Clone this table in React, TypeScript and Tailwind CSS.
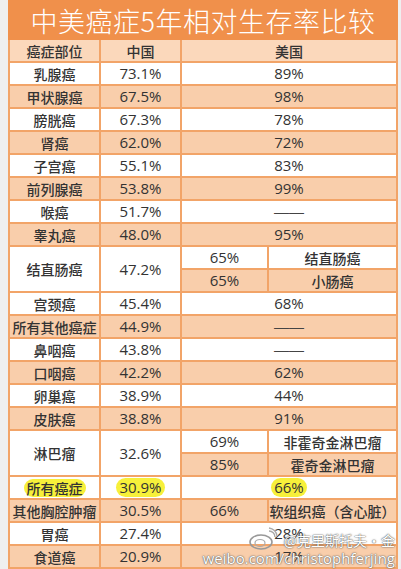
import React from "react";

type Row =
  | { kind: "single"; name: string; cn: string; us: string; bg: "w" | "p"; hl?: boolean }
  | { kind: "pair"; name: string; cn: string; us: string; note: string; bg: "w" | "p" }
  | { kind: "split"; name: string; cn: string; subs: [string, string][] };

const rows: Row[] = [
  { kind: "single", name: "乳腺癌", cn: "73.1%", us: "89%", bg: "w" },
  { kind: "single", name: "甲状腺癌", cn: "67.5%", us: "98%", bg: "p" },
  { kind: "single", name: "膀胱癌", cn: "67.3%", us: "78%", bg: "w" },
  { kind: "single", name: "肾癌", cn: "62.0%", us: "72%", bg: "p" },
  { kind: "single", name: "子宫癌", cn: "55.1%", us: "83%", bg: "w" },
  { kind: "single", name: "前列腺癌", cn: "53.8%", us: "99%", bg: "p" },
  { kind: "single", name: "喉癌", cn: "51.7%", us: "——", bg: "w" },
  { kind: "single", name: "睾丸癌", cn: "48.0%", us: "95%", bg: "p" },
  { kind: "split", name: "结直肠癌", cn: "47.2%", subs: [["65%", "结直肠癌"], ["65%", "小肠癌"]] },
  { kind: "single", name: "宫颈癌", cn: "45.4%", us: "68%", bg: "w" },
  { kind: "single", name: "所有其他癌症", cn: "44.9%", us: "——", bg: "p" },
  { kind: "single", name: "鼻咽癌", cn: "43.8%", us: "——", bg: "w" },
  { kind: "single", name: "口咽癌", cn: "42.2%", us: "62%", bg: "p" },
  { kind: "single", name: "卵巢癌", cn: "38.9%", us: "44%", bg: "w" },
  { kind: "single", name: "皮肤癌", cn: "38.8%", us: "91%", bg: "p" },
  { kind: "split", name: "淋巴瘤", cn: "32.6%", subs: [["69%", "非霍奇金淋巴瘤"], ["85%", "霍奇金淋巴瘤"]] },
  { kind: "single", name: "所有癌症", cn: "30.9%", us: "66%", bg: "w", hl: true },
  { kind: "pair", name: "其他胸腔肿瘤", cn: "30.5%", us: "66%", note: "软组织癌（含心脏）", bg: "p" },
  { kind: "single", name: "胃癌", cn: "27.4%", us: "28%", bg: "w" },
  { kind: "single", name: "食道癌", cn: "20.9%", us: "17%", bg: "p" },
];

const cjk = "font-['Noto_Sans_CJK_SC',sans-serif] font-medium text-[14px]";
const num = "font-['Open_Sans','Noto_Sans_CJK_SC',sans-serif] text-[15px]";
const dash = "font-['Liberation_Sans',sans-serif] text-[15px] text-[#444]";
const cell = "flex items-center justify-center text-[#333] leading-none whitespace-nowrap";
const bgOf = (b: "w" | "p") => (b === "w" ? "bg-white" : "bg-[#f9ceab]");

function Hl({ children }: { children: React.ReactNode }) {
  return <span className="bg-[#f7f03a] rounded-full px-[3px] py-[2px]">{children}</span>;
}

export default function App() {
  return (
    <div className="w-[401px] h-[569px] overflow-hidden bg-[#efefef] relative">
      <div className="ml-[8px] w-[390px]">
        <div className="h-[40px] bg-[#f0904b] flex items-center justify-center">
          <span className="font-['Noto_Sans_CJK_SC',sans-serif] font-light text-[27px] text-white leading-none tracking-[0.5px]">
            中美癌症5年相对生存率比较
          </span>
        </div>
        <div className="bg-[#f2a468] p-[2px] pt-0 grid grid-cols-[89px_79px_85px_127px] auto-rows-[21px] gap-[2px]">
          <div className={`${cell} ${cjk} bg-[#fbd8bb]`}>癌症部位</div>
          <div className={`${cell} ${cjk} bg-[#fbd8bb]`}>中国</div>
          <div className={`${cell} ${cjk} bg-[#fbd8bb] col-span-2`}>美国</div>
          {rows.map((r) => {
            if (r.kind === "split") {
              return (
                <React.Fragment key={r.name}>
                  <div className={`${cell} ${cjk} bg-white row-span-2`}>{r.name}</div>
                  <div className={`${cell} ${num} bg-white row-span-2`}>{r.cn}</div>
                  <div className={`${cell} ${num} bg-white`}>{r.subs[0][0]}</div>
                  <div className={`${cell} ${cjk} bg-white`}>{r.subs[0][1]}</div>
                  <div className={`${cell} ${num} bg-[#f9ceab]`}>{r.subs[1][0]}</div>
                  <div className={`${cell} ${cjk} bg-[#f9ceab]`}>{r.subs[1][1]}</div>
                </React.Fragment>
              );
            }
            if (r.kind === "pair") {
              return (
                <React.Fragment key={r.name}>
                  <div className={`${cell} ${cjk} ${bgOf(r.bg)}`}>{r.name}</div>
                  <div className={`${cell} ${num} ${bgOf(r.bg)}`}>{r.cn}</div>
                  <div className={`${cell} ${num} ${bgOf(r.bg)}`}>{r.us}</div>
                  <div className={`${cell} ${cjk} ${bgOf(r.bg)}`}>{r.note}</div>
                </React.Fragment>
              );
            }
            return (
              <React.Fragment key={r.name}>
                <div className={`${cell} ${cjk} ${bgOf(r.bg)}`}>{r.hl ? <Hl>{r.name}</Hl> : r.name}</div>
                <div className={`${cell} ${num} ${bgOf(r.bg)}`}>{r.hl ? <Hl>{r.cn}</Hl> : r.cn}</div>
                <div className={`${cell} ${r.us === "——" ? dash : num} ${bgOf(r.bg)} col-span-2`}>
                  {r.hl ? <Hl>{r.us}</Hl> : r.us}
                </div>
              </React.Fragment>
            );
          })}
          <div className={`${cell} bg-white`} />
          <div className={`${cell} bg-white`} />
          <div className={`${cell} bg-white col-span-2`} />
        </div>
      </div>

      {/* weibo watermark */}
      <div className="absolute right-[6px] bottom-[3px] flex flex-col items-end text-white [text-shadow:0_0_1px_#444,0_0_2px_#666]">
        <div className="flex items-end gap-[2px]">
          <svg width="30" height="24" viewBox="0 0 30 24" className="mb-[-4px] mr-[4px]">
            <ellipse cx="13" cy="15" rx="11" ry="7" fill="none" stroke="#999" strokeWidth="1.6" />
            <ellipse cx="12" cy="16" rx="5" ry="3.5" fill="none" stroke="#aaa" strokeWidth="1.2" />
            <path d="M21 4 a6 6 0 0 1 6 6" fill="none" stroke="#aaa" strokeWidth="1.4" />
            <path d="M21 1 a9 9 0 0 1 8 8" fill="none" stroke="#aaa" strokeWidth="1.4" />
          </svg>
          <span className="font-['Noto_Sans_CJK_SC',sans-serif] text-[14px] leading-none">@克里斯托夫·金</span>
        </div>
        <span className="font-['Open_Sans',sans-serif] text-[15px] leading-none mt-[4px]">weibo.com/christophferjing</span>
      </div>
    </div>
  );
}
